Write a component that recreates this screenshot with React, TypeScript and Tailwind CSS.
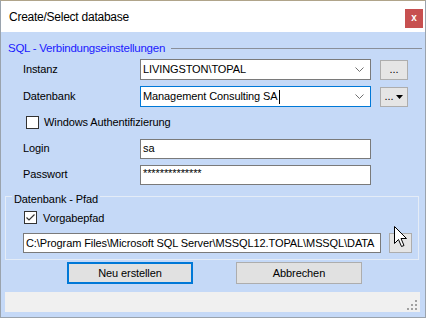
import React from 'react';

const Chevron = () => (
    <svg width="9" height="5" viewBox="0 0 9 5" className="shrink-0">
        <path d="M0.5 0.5 L4.5 4.5 L8.5 0.5" fill="none" stroke="#707070" strokeWidth="1" />
    </svg>
);

const Combo = ({ text, focused, caret }: { text: string; focused?: boolean; caret?: boolean }) => (
    <div
        className={`w-[231px] h-[21px] bg-white border flex items-center pl-[2px] pr-[6px] ${
            focused ? 'border-[#0078d7]' : 'border-[#7a7a7a]'
        }`}
    >
        <span className="flex-1 flex items-center whitespace-nowrap">
            {text}
            {caret && <span className="w-px h-[14px] bg-black ml-[1px]" />}
        </span>
        <Chevron />
    </div>
);

const SmallButton = ({ arrow }: { arrow?: boolean }) => (
    <div className="ml-[9px] w-[28px] h-[20px] bg-[#e5e5e5] border border-[#adadad] flex items-center justify-center gap-[3px] text-[11px] leading-none">
        <span>...</span>
        {arrow && (
            <svg width="7" height="4" viewBox="0 0 7 4" className="mt-[1px]">
                <path d="M0 0 H7 L3.5 4 Z" fill="#000" />
            </svg>
        )}
    </div>
);

const TextBox = ({ children, className = '' }: { children?: React.ReactNode; className?: string }) => (
    <div className={`h-[20px] bg-white border border-[#7a7a7a] flex items-center pl-[2px] whitespace-nowrap overflow-hidden ${className}`}>
        {children}
    </div>
);

const CheckBox = ({ checked }: { checked?: boolean }) => (
    <div className="w-[13px] h-[13px] bg-white border border-[#333333] flex items-center justify-center shrink-0">
        {checked && (
            <svg width="11" height="11" viewBox="0 0 11 11">
                <path d="M1.5 5.5 L4 8 L9.5 2.5" fill="none" stroke="#333333" strokeWidth="1.2" />
            </svg>
        )}
    </div>
);

export default function App() {
    return (
        <div className="relative w-[426px] h-[318px] flex flex-col bg-[#c5d9f7] border-x border-b border-[#9aa3ad] border-t border-t-[#b0a48a] font-['Liberation_Sans',Arial,sans-serif] text-[11px] tracking-[-0.1px] text-black overflow-hidden">
            {/* title bar */}
            <div className="h-[31px] bg-white flex justify-between pl-[8px] pr-[2px] shrink-0">
                <span className="self-center text-[12px] tracking-[-0.25px] mt-[1px]">Create/Select database</span>
                <div className="mt-[8px] w-[18px] h-[19px] bg-[#c75050] text-white font-bold text-[10px] flex items-center justify-center pb-[2px]">
                    x
                </div>
            </div>

            {/* SQL group */}
            <div className="mt-[8px] h-[16px] flex items-center pl-[7px] pr-[3px]">
                <span className="text-[11.5px] tracking-[-0.25px] leading-[16px] text-[#1a1aff]">SQL - Verbindungseinstellungen</span>
                <div className="flex-1 h-px bg-[#8a8f99] ml-[6px] mt-[1px]" />
            </div>

            <div className="mt-[3px] flex items-center pl-[22px]">
                <span className="w-[117px]">Instanz</span>
                <Combo text="LIVINGSTON\TOPAL" />
                <SmallButton />
            </div>
            <div className="mt-[6px] flex items-center pl-[22px]">
                <span className="w-[117px]">Datenbank</span>
                <Combo text="Management Consulting SA" focused caret />
                <SmallButton arrow />
            </div>
            <div className="mt-[7px] flex items-center pl-[25px]">
                <CheckBox />
                <span className="ml-[5px]">Windows Authentifizierung</span>
            </div>
            <div className="mt-[8px] flex items-center pl-[22px]">
                <span className="w-[117px]">Login</span>
                <TextBox className="w-[231px]">sa</TextBox>
            </div>
            <div className="mt-[6px] flex items-center pl-[22px]">
                <span className="w-[117px]">Passwort</span>
                <TextBox className="w-[231px]">
                    <span className="-mt-[3px]">**************</span>
                </TextBox>
            </div>

            {/* path group */}
            <fieldset className="mt-[3px] ml-[4px] mr-[6px] border border-[#e4ecf7] px-[6px] pb-[6px]">
                <legend className="px-[2px] pt-[5px] text-[11px] leading-[13px]">Datenbank - Pfad</legend>
                <div className="mt-[4px] flex items-center pl-[12px]">
                    <CheckBox checked />
                    <span className="ml-[6px]">Vorgabepfad</span>
                </div>
                <div className="mt-[7px] flex items-center pl-[11px]">
                    <TextBox className="w-[358px]">
                        C:\Program Files\Microsoft SQL Server\MSSQL12.TOPAL\MSSQL\DATA
                    </TextBox>
                    <div className="ml-[8px] w-[23px] h-[20px] bg-[#e5e5e5] border border-[#adadad]" />
                </div>
            </fieldset>

            {/* buttons */}
            <div className="mt-[2px] flex pl-[66px] gap-[43px]">
                <div className="w-[126px] h-[22px] bg-[#e1e1e1] border-2 border-[#0078d7] flex items-center justify-center">
                    Neu erstellen
                </div>
                <div className="w-[126px] h-[22px] bg-[#e1e1e1] border border-[#adadad] flex items-center justify-center">
                    Abbrechen
                </div>
            </div>

            {/* status bar */}
            <div className="mt-[8px] ml-[4px] mr-[5px] h-[20px] bg-[#f0f0f0] flex justify-end items-end pr-[2px] pb-[1px]">
                <svg width="11" height="11" viewBox="0 0 11 11">
                    <rect x="8" y="0" width="2" height="2" fill="#a0a0a0" />
                    <rect x="4" y="4" width="2" height="2" fill="#a0a0a0" />
                    <rect x="8" y="4" width="2" height="2" fill="#a0a0a0" />
                    <rect x="0" y="8" width="2" height="2" fill="#a0a0a0" />
                    <rect x="4" y="8" width="2" height="2" fill="#a0a0a0" />
                    <rect x="8" y="8" width="2" height="2" fill="#a0a0a0" />
                </svg>
            </div>

            {/* mouse pointer */}
            <svg className="absolute left-[393px] top-[225px]" width="14" height="22" viewBox="0 0 14 22">
                <path d="M0.5 0.5 V17.5 L4.5 13.5 L7.5 20.5 L10 19.5 L7 12.5 L12.5 12.5 Z" fill="#ffffff" stroke="#000000" strokeWidth="1" strokeLinejoin="miter" />
            </svg>
        </div>
    );
}
